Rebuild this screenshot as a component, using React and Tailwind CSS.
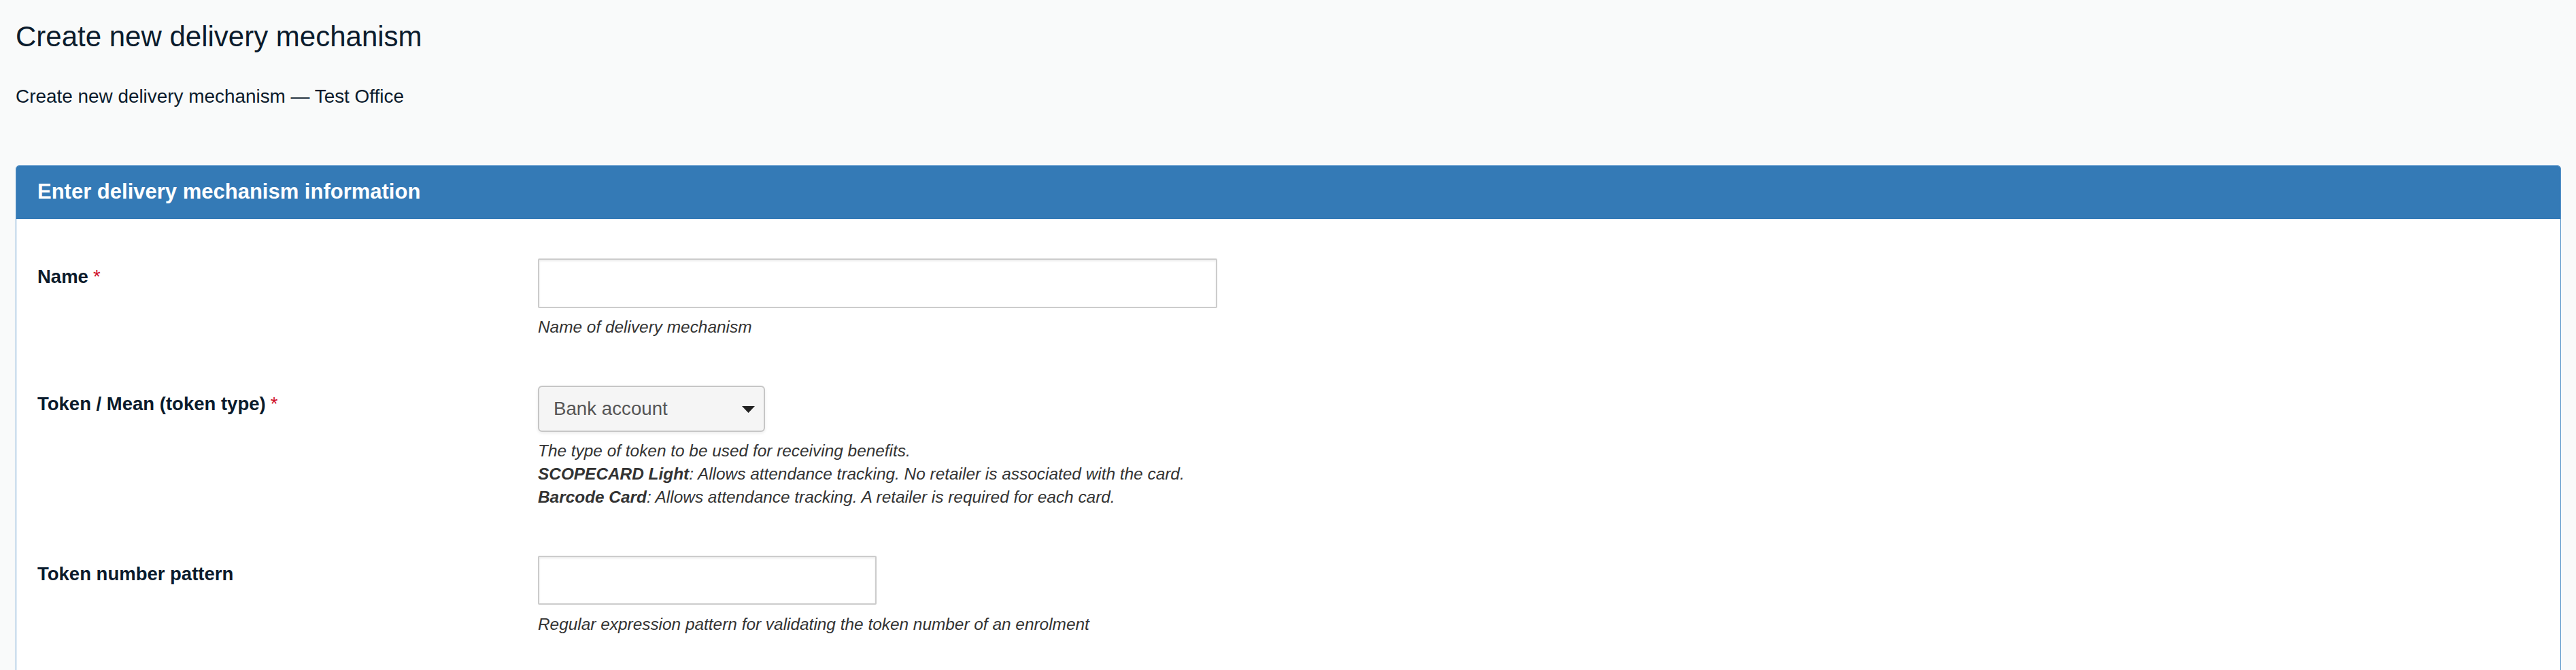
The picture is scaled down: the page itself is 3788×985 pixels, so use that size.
import React from "react";

function Label({ children, required }) {
  return (
    <div className="pt-[8.5px] text-[27.5px] leading-[38px] font-bold text-[#0b1b2c]">
      {children}
      {required && <span className="ml-[7px] font-normal text-[#d0112b]">*</span>}
    </div>
  );
}

function Help({ children }) {
  return (
    <div className="mt-[11.5px] text-[24.4px] leading-[34px] italic text-[#333333]">
      {children}
    </div>
  );
}

export default function App() {
  return (
    <div className="min-h-screen bg-[#f9fafa] font-['Liberation_Sans',Arial,sans-serif] text-[#0b1b2c]">
      <div className="pl-[23px] pr-[22px] pt-[30px]">
        <h1 className="text-[42px] leading-[47px] font-normal">Create new delivery mechanism</h1>
        <p className="mt-[45.8px] text-[27.9px] leading-[38.6px]">
          Create new delivery mechanism — Test Office
        </p>

        <div className="mt-[81.2px] rounded-[5px] border border-[#5592c8] bg-white">
          <div className="rounded-t-[4px] bg-[#347ab6] px-[31px] pt-[21px] pb-[23px] text-[31px] leading-[34px] font-bold text-white">
            Enter delivery mechanism information
          </div>

          <div className="flex flex-col gap-[68.5px] px-[31px] pt-[58.3px] pb-[200px]">
            <div className="grid grid-cols-[736px_1fr]">
              <Label required>Name</Label>
              <div>
                <div className="h-[73px] w-[999px] rounded-[2px] border-2 border-[#cccccc] bg-white shadow-[inset_0_2px_3px_rgba(0,0,0,0.08)]" />
                <Help>Name of delivery mechanism</Help>
              </div>
            </div>

            <div className="grid grid-cols-[736px_1fr]">
              <Label required>Token / Mean (token type)</Label>
              <div>
                <div className="flex h-[68px] w-[334px] items-center justify-between rounded-[6px] border-2 border-[#c6c6c6] bg-[#f5f5f5] pl-[21px] pr-[13px] shadow-[0_2px_4px_rgba(0,0,0,0.08)]">
                  <span className="text-[27.7px] text-[#555555]">Bank account</span>
                  <svg width="19" height="10" viewBox="0 0 19 10" className="mt-[2px]">
                    <polygon points="0,0 19,0 9.5,10" fill="#222222" />
                  </svg>
                </div>
                <Help>
                  <div>The type of token to be used for receiving benefits.</div>
                  <div>
                    <b>SCOPECARD Light</b>: Allows attendance tracking. No retailer is associated with the card.
                  </div>
                  <div>
                    <b>Barcode Card</b>: Allows attendance tracking. A retailer is required for each card.
                  </div>
                </Help>
              </div>
            </div>

            <div className="grid grid-cols-[736px_1fr]">
              <Label>Token number pattern</Label>
              <div>
                <div className="h-[72.6px] w-[498px] rounded-[2px] border-2 border-[#cccccc] bg-white shadow-[inset_0_2px_3px_rgba(0,0,0,0.08)]" />
                <Help>Regular expression pattern for validating the token number of an enrolment</Help>
              </div>
            </div>
          </div>
        </div>
      </div>
    </div>
  );
}
